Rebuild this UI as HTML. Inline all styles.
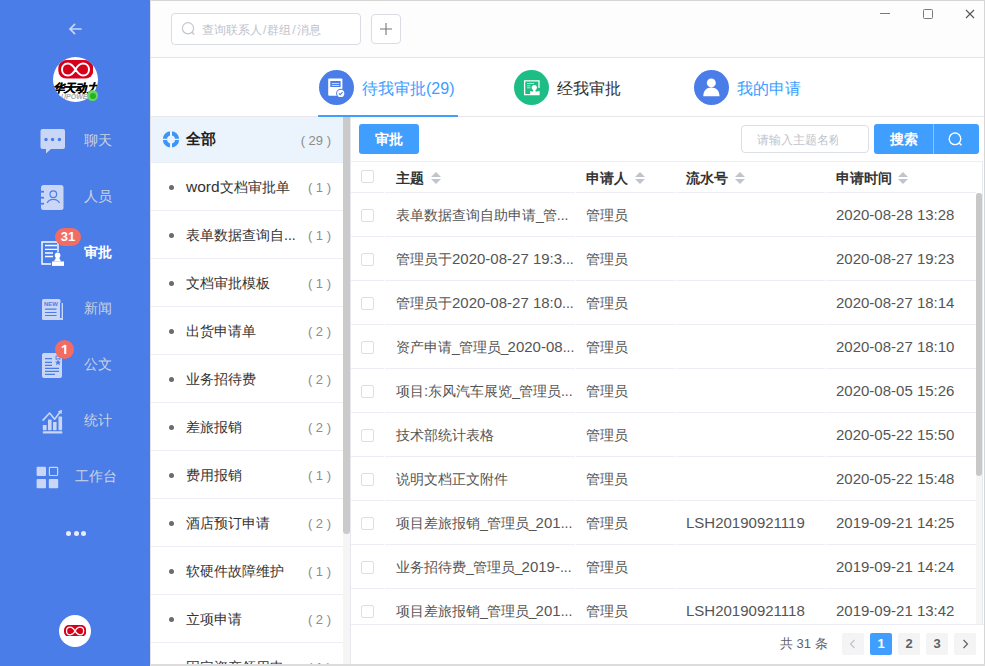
<!DOCTYPE html>
<html><head><meta charset="utf-8"><style>
*{box-sizing:border-box;margin:0;padding:0}
html,body{width:985px;height:666px;overflow:hidden;background:#fff;font-family:"Liberation Sans",sans-serif;}
.a{position:absolute}
.nt{position:absolute;font-size:14px;line-height:20px;color:#cbd3e2;white-space:nowrap}
.badge{position:absolute;background:#f36c64;color:#fff;font-weight:bold;font-size:13px;text-align:center;border-radius:10px;line-height:18px;height:18px}
.cat{position:absolute;left:150px;width:193px;height:48px;border-bottom:1px solid #ebeef5;background:#fff}
.dot{position:absolute;left:19px;top:22px;width:5px;height:5px;border-radius:50%;background:#6b6b6b}
.nm{position:absolute;left:36px;top:14px;line-height:20px;font-size:14px;color:#333;white-space:nowrap}
.cn{position:absolute;right:12px;top:15px;line-height:20px;font-size:13px;color:#8c8c8c;white-space:pre}
.row{position:absolute;left:351px;width:625px;height:44px;border-bottom:1px solid #ebeef5}
.c{position:absolute;top:12px;line-height:20px;font-size:14px;color:#555;white-space:nowrap}
.cb{position:absolute;left:10px;top:16px;width:13px;height:13px;border:1px solid #dcdfe6;border-radius:2px;background:#fff}
.pg{position:absolute;top:633px;width:22px;height:22px;background:#f4f4f5;border-radius:2px;font-size:13px;font-weight:bold;color:#606266;text-align:center;line-height:22px}
.l{font-size:15px}
.car{position:absolute;width:0;height:0;border-left:5px solid transparent;border-right:5px solid transparent}
</style></head><body>
<div class="a" style="left:0;top:0;width:150px;height:666px;background:#4a7de8"></div>
<svg class="a" style="left:66px;top:21px" width="18" height="16" viewBox="0 0 18 16"><path d="M15 8H4M8.6 3.4L4 8 8.6 12.6" fill="none" stroke="#c9d6f6" stroke-width="1.7" stroke-linecap="round"/></svg>
<div class="a" style="left:53px;top:57px;width:45px;height:45px;border-radius:50%;background:#fff;overflow:hidden"><svg class="a" style="left:5px;top:3px" width="35" height="19" viewBox="0 0 35 19"><rect x="0.3" y="0" width="35" height="18.6" rx="8" fill="#d7001a"/><path d="M17.5 9.5C20 5 22 3.5 25 3.5C29 3.5 31 6.5 31 9.5C31 12.5 29 15.5 25 15.5C21.5 15.5 19.5 12.5 17.5 9.5C15.5 6.5 13.5 3.5 10 3.5C6 3.5 4 6.5 4 9.5C4 12.5 6 15.5 10 15.5C13 15.5 15 14 17.5 9.5Z" fill="none" stroke="#fff" stroke-width="2"/></svg><div class="a" style="left:-3px;top:25px;width:51px;white-space:nowrap;text-align:center;font-size:11.5px;line-height:12px;font-weight:bold;font-style:italic;color:#000;letter-spacing:-0.6px;-webkit-text-stroke:0.3px #000">华天动力</div><div class="a" style="left:8px;top:36px;font-size:7px;line-height:8px;font-weight:bold;font-style:italic;color:#aaa">UPOWER</div></div>
<div class="a" style="left:87px;top:90px;width:11px;height:11px;border-radius:50%;background:#6ed36a"></div>
<div class="a" style="left:89.5px;top:92.5px;width:6px;height:6px;border-radius:50%;background:#1fb51c"></div>
<svg class="a" style="left:40px;top:128px" width="26" height="27" viewBox="0 0 26 27"><path d="M2.5 1H23a2 2 0 0 1 2 2V19a2 2 0 0 1-2 2H11L6 25.5V21H2.5a2 2 0 0 1-2-2V3a2 2 0 0 1 2-2z" fill="#c9d6f6"/><circle cx="6" cy="11.5" r="1.7" fill="#4a7de8"/><circle cx="12.6" cy="11.5" r="1.7" fill="#4a7de8"/><circle cx="19.4" cy="11.5" r="1.7" fill="#4a7de8"/></svg>
<div class="nt" style="left:84px;top:130px">聊天</div>
<svg class="a" style="left:40px;top:184px" width="25" height="27" viewBox="0 0 25 27"><rect x="1" y="1" width="22.5" height="25" rx="2.5" fill="#c9d6f6"/><rect x="0" y="6.8" width="4" height="1.8" fill="#4a7de8"/><rect x="0" y="12.8" width="4" height="1.8" fill="#4a7de8"/><rect x="0" y="18.8" width="4" height="1.8" fill="#4a7de8"/><circle cx="13.3" cy="10.2" r="3.3" fill="none" stroke="#4a7de8" stroke-width="1.2"/><path d="M7.2 19C9.5 14.2 17 14.2 19.5 19" fill="none" stroke="#4a7de8" stroke-width="1.2"/></svg>
<div class="nt" style="left:84px;top:186px">人员</div>
<svg class="a" style="left:40px;top:240px" width="26" height="28" viewBox="0 0 26 28"><path d="M18 12V2H2V24H11" fill="none" stroke="#fff" stroke-width="1.4"/><path d="M5 5.5H17M5 9.4H17M5 13H13M5 16.5H13" stroke="#fff" stroke-width="1.4"/><circle cx="17.6" cy="15.4" r="2.8" fill="#fff"/><path d="M16.2 17.5H19L21 21.5H16.2L13.8 21.5z" fill="#fff"/><rect x="12" y="21.5" width="12" height="4.4" fill="#fff"/></svg>
<div class="badge" style="left:55px;top:228px;width:26px">31</div>
<div class="nt" style="left:84px;top:242px;font-weight:bold;color:#fff">审批</div>
<svg class="a" style="left:41px;top:298px" width="23" height="23" viewBox="0 0 23 23"><path d="M19 5H22V22H20V5z" fill="#c9d6f6"/><rect x="1" y="1" width="18.5" height="21" rx="1.5" fill="#c9d6f6"/><rect x="18.5" y="5" width="3.5" height="17" rx="1" fill="#c9d6f6"/><rect x="19" y="5" width="1.6" height="15" fill="#4a7de8"/><text x="3" y="8.2" font-family="Liberation Sans" font-weight="bold" font-size="6" fill="#4a7de8" textLength="14">NEW</text><path d="M4 11.1H15.5M4 14.5H15.5M4 17.5H15.5" stroke="#4a7de8" stroke-width="1.2"/></svg>
<div class="nt" style="left:84px;top:298px">新闻</div>
<svg class="a" style="left:42px;top:353px" width="21" height="26" viewBox="0 0 21 26"><rect x="0" y="0" width="20" height="25" rx="2" fill="#c9d6f6"/><path d="M3 5.6H10M3 9.4H10M3 12.4H10M3 15.4H17M3 18.4H17M3 21.4H13" stroke="#4a7de8" stroke-width="1.1"/><path d="M14 3H18V6.5L16 5.5 14 6.5z" fill="none" stroke="#4a7de8" stroke-width="0.9"/><path d="M16 6.5L16.9 8.6 19 8.7 17.4 10 18 12.2 16 11 14 12.2 14.6 10 13 8.7 15.1 8.6z" fill="#4a7de8"/></svg>
<div class="badge" style="left:55px;top:340px;width:19px;height:19px;border-radius:50%;line-height:19px"></div>
<svg class="a" style="left:55px;top:340px" width="19" height="19" viewBox="0 0 19 19"><path d="M10.2 5V14" stroke="#fff" stroke-width="2.1"/><path d="M6.8 7.6L10.4 5.2" stroke="#fff" stroke-width="1.6"/></svg>
<div class="nt" style="left:84px;top:354px">公文</div>
<svg class="a" style="left:42px;top:409px" width="22" height="26" viewBox="0 0 22 26"><rect x="0.8" y="22.2" width="19.5" height="2.4" rx="0.6" fill="#c9d6f6"/><rect x="0.8" y="16" width="3.8" height="5.2" rx="0.6" fill="#c9d6f6"/><rect x="6" y="10.5" width="3.6" height="10.7" rx="0.6" fill="#c9d6f6"/><rect x="11" y="13" width="3.6" height="8.2" rx="0.6" fill="#c9d6f6"/><rect x="16.5" y="7.5" width="3.6" height="13.7" rx="0.6" fill="#c9d6f6"/><path d="M0.6 11.6L7.6 4 12.6 10.2 18.6 2.3" fill="none" stroke="#c9d6f6" stroke-width="1.6" stroke-linejoin="round"/><path d="M20 0.8L19.6 5.2 15.8 2.6z" fill="#c9d6f6"/></svg>
<div class="nt" style="left:84px;top:410px">统计</div>
<svg class="a" style="left:36px;top:466px" width="23" height="23" viewBox="0 0 23 23"><rect x="0.6" y="0.7" width="9.4" height="9.4" rx="1" fill="#c9d6f6"/><rect x="13.4" y="1.3" width="8.2" height="8.2" rx="0.8" fill="none" stroke="#c9d6f6" stroke-width="1.2"/><rect x="0.6" y="12.9" width="9.4" height="9.4" rx="1" fill="#c9d6f6"/><rect x="12.8" y="12.9" width="9.4" height="9.4" rx="1" fill="#c9d6f6"/></svg>
<div class="nt" style="left:75px;top:466px">工作台</div>
<div class="a" style="left:66.4px;top:531px;width:5px;height:5px;border-radius:50%;background:#e8ecf6"></div>
<div class="a" style="left:73.8px;top:531px;width:5px;height:5px;border-radius:50%;background:#e8ecf6"></div>
<div class="a" style="left:81.2px;top:531px;width:5px;height:5px;border-radius:50%;background:#e8ecf6"></div>
<div class="a" style="left:59px;top:615px;width:32px;height:32px;border-radius:50%;background:#fff"></div>
<svg class="a" style="left:64px;top:624.7px" width="22.2" height="11.8" viewBox="0 0 35 18.6"><rect x="0" y="0" width="35" height="18.6" rx="8" fill="#d7001a"/><path d="M17.5 9.5C20 5 22 3.5 25 3.5C29 3.5 31 6.5 31 9.5C31 12.5 29 15.5 25 15.5C21.5 15.5 19.5 12.5 17.5 9.5C15.5 6.5 13.5 3.5 10 3.5C6 3.5 4 6.5 4 9.5C4 12.5 6 15.5 10 15.5C13 15.5 15 14 17.5 9.5Z" fill="none" stroke="#fff" stroke-width="2"/></svg>
<div class="a" style="left:150px;top:0;width:835px;height:666px;background:#fff"></div>
<div class="a" style="left:150px;top:0;width:835px;height:58px;background:#fdfdfd;border-top:1px solid #d6d6d6;border-bottom:1px solid #e4e4e4"></div>
<div class="a" style="left:171px;top:13px;width:190px;height:32px;border:1px solid #d9dce3;border-radius:4px;background:#fff"></div>
<svg class="a" style="left:181px;top:21px" width="16" height="16" viewBox="0 0 16 16"><circle cx="7" cy="7.3" r="5.6" fill="none" stroke="#c3c6cf" stroke-width="1.2"/><path d="M11 11.3L13.2 13.5" stroke="#c3c6cf" stroke-width="1.3"/></svg>
<div class="a" style="left:202px;top:20px;font-size:12px;line-height:20px;color:#bfc2ca;white-space:nowrap">查询联系人<span style="padding:0 1px">/</span>群组<span style="padding:0 1px">/</span>消息</div>
<div class="a" style="left:371px;top:14px;width:30px;height:30px;border:1px solid #d9dce3;border-radius:4px;background:#fff"></div>
<svg class="a" style="left:380px;top:23px" width="12" height="12" viewBox="0 0 12 12"><path d="M0 6H12M6 0V12" stroke="#777" stroke-width="1.1"/></svg>
<div class="a" style="left:880px;top:13px;width:10px;height:1px;background:#7a7a7a"></div>
<div class="a" style="left:923px;top:9px;width:10px;height:10px;border:1px solid #7a7a7a;border-radius:1.5px"></div>
<svg class="a" style="left:965px;top:9px" width="10" height="10" viewBox="0 0 10 10"><path d="M1 1L9 9M9 1L1 9" stroke="#555" stroke-width="1.1"/></svg>
<div class="a" style="left:984px;top:0;width:1px;height:666px;background:#d6d6d6"></div>
<div class="a" style="left:150px;top:116px;width:834px;height:1px;background:#e8e8e8"></div>
<div class="a" style="left:318px;top:115px;width:140px;height:2px;background:#409eff"></div>
<div class="a" style="left:319px;top:70px;width:35px;height:35px;border-radius:50%;background:#4a7de8"></div>
<svg class="a" style="left:319px;top:70px" width="35" height="35" viewBox="0 0 35 35"><rect x="9.2" y="8.5" width="14.2" height="17.2" rx="1" fill="#fff"/><rect x="11.3" y="11" width="10.3" height="6" fill="#4a7de8"/><path d="M12.8 13.5H20.2M12.8 15.5H20.2" stroke="#c9d8fa" stroke-width="1"/><circle cx="21.7" cy="23.4" r="4.6" fill="#4a7de8"/><circle cx="21.7" cy="23.4" r="3.6" fill="#fff"/><path d="M19.9 23.3L21.2 24.6 23.6 22.2" fill="none" stroke="#4a7de8" stroke-width="1.1"/></svg>
<div class="a" style="left:362px;top:77.5px;font-size:16px;line-height:22px;color:#409eff;white-space:nowrap">待我审批(29)</div>
<div class="a" style="left:514px;top:70px;width:35px;height:35px;border-radius:50%;background:#1dbe85"></div>
<svg class="a" style="left:514px;top:70px" width="35" height="35" viewBox="0 0 35 35"><path d="M16.5 24.6H10.6V10.8H25V18" fill="none" stroke="#fff" stroke-width="1.3"/><path d="M13 13.5H20M13 15.8H16.5M13 17.8H16.5" stroke="#fff" stroke-width="0.9" opacity="0.75"/><circle cx="20.3" cy="17.6" r="2.6" fill="#fff"/><path d="M19.4 19.5H21.2L21.8 21.8 25.6 21V25.3H16.2V21L18.8 21.8z" fill="#fff"/></svg>
<div class="a" style="left:557px;top:77.5px;font-size:16px;line-height:22px;color:#333;white-space:nowrap">经我审批</div>
<div class="a" style="left:694px;top:70px;width:35px;height:35px;border-radius:50%;background:#4a7de8"></div>
<svg class="a" style="left:694px;top:70px" width="35" height="35" viewBox="0 0 35 35"><circle cx="17.3" cy="12.9" r="4.5" fill="#fff"/><path d="M9.3 26.2C9.3 21 12.5 17.6 17.3 17.6S25.5 21 25.5 26.2z" fill="#fff"/></svg>
<div class="a" style="left:737px;top:77.5px;font-size:16px;line-height:22px;color:#409eff;white-space:nowrap">我的申请</div>
<div class="a" style="left:150px;top:117px;width:193px;height:46px;background:#ebf3fd;border-bottom:1px solid #ebeef5"></div>
<svg class="a" style="left:162px;top:131px" width="18" height="18" viewBox="0 0 18 18"><circle cx="9" cy="8.4" r="6.1" fill="none" stroke="#3d95f5" stroke-width="4.2"/><path d="M9 0V17" stroke="#ebf3fd" stroke-width="2"/><path d="M0 8.4H18" stroke="#ebf3fd" stroke-width="1.3"/></svg>
<div class="a" style="left:186px;top:129px;font-size:15px;line-height:20px;font-weight:bold;color:#222;white-space:nowrap">全部</div>
<div class="cn" style="left:auto;right:654px;top:131px">( 29 )</div>
<div class="cat" style="top:163px"><div class="dot"></div><div class="nm"><span style="font-size:15.5px">word</span>文档审批单</div><div class="cn">( 1 )</div></div>
<div class="cat" style="top:211px"><div class="dot"></div><div class="nm">表单数据查询自...</div><div class="cn">( 1 )</div></div>
<div class="cat" style="top:259px"><div class="dot"></div><div class="nm">文档审批模板</div><div class="cn">( 1 )</div></div>
<div class="cat" style="top:307px"><div class="dot"></div><div class="nm">出货申请单</div><div class="cn">( 2 )</div></div>
<div class="cat" style="top:355px"><div class="dot"></div><div class="nm">业务招待费</div><div class="cn">( 2 )</div></div>
<div class="cat" style="top:403px"><div class="dot"></div><div class="nm">差旅报销</div><div class="cn">( 2 )</div></div>
<div class="cat" style="top:451px"><div class="dot"></div><div class="nm">费用报销</div><div class="cn">( 1 )</div></div>
<div class="cat" style="top:499px"><div class="dot"></div><div class="nm">酒店预订申请</div><div class="cn">( 2 )</div></div>
<div class="cat" style="top:547px"><div class="dot"></div><div class="nm">软硬件故障维护</div><div class="cn">( 1 )</div></div>
<div class="cat" style="top:595px"><div class="dot"></div><div class="nm">立项申请</div><div class="cn">( 2 )</div></div>
<div class="cat" style="top:643px"><div class="dot"></div><div class="nm">固定资产领用申...</div><div class="cn">( 1 )</div></div>
<div class="a" style="left:343px;top:117px;width:8px;height:549px;background:#f5f5f5"></div>
<div class="a" style="left:343px;top:117px;width:7px;height:417px;border-radius:0 0 3.5px 3.5px;background:#cacaca"></div>
<div class="a" style="left:350px;top:117px;width:1px;height:549px;background:#e6e8ee"></div>
<div class="a" style="left:359px;top:124px;width:60px;height:30px;border-radius:3px;background:#409eff;color:#fff;font-weight:bold;font-size:14px;line-height:30px;text-align:center">审批</div>
<div class="a" style="left:741px;top:125px;width:128px;height:28px;border:1px solid #dcdfe6;border-radius:4px;background:#fff"></div>
<div class="a" style="left:757px;top:130.5px;width:81px;overflow:hidden;font-size:12px;line-height:19px;color:#c0c4cc;white-space:nowrap">请输入主题名称</div>
<div class="a" style="left:874px;top:124px;width:105px;height:30px;border-radius:3px;background:#409eff"></div>
<div class="a" style="left:933px;top:124px;width:1px;height:30px;background:#8cc3ff"></div>
<div class="a" style="left:874px;top:124px;width:59px;font-size:14px;line-height:30px;color:#fff;text-align:center;font-weight:bold">搜索</div>
<svg class="a" style="left:947px;top:131px" width="17" height="17" viewBox="0 0 17 17"><circle cx="8" cy="7.8" r="5.8" fill="none" stroke="#fff" stroke-width="1.4"/><path d="M12 11.8L14.5 14.3" stroke="#fff" stroke-width="1.5"/></svg>
<div class="a" style="left:351px;top:161px;width:631px;height:1px;background:#ebeef5"></div>
<div class="row" style="top:161px;height:32px"><div class="cb" style="top:9px"></div><div class="c" style="left:45px;top:7px;font-weight:bold;color:#333">主题</div><div class="c" style="left:235px;top:7px;font-weight:bold;color:#333">申请人</div><div class="c" style="left:335px;top:7px;font-weight:bold;color:#333">流水号</div><div class="c" style="left:485px;top:7px;font-weight:bold;color:#333">申请时间</div></div>
<div class="car" style="left:431px;top:172px;border-bottom:5px solid #c0c4cc"></div>
<div class="car" style="left:431px;top:179px;border-top:5px solid #c0c4cc"></div>
<div class="car" style="left:635px;top:172px;border-bottom:5px solid #c0c4cc"></div>
<div class="car" style="left:635px;top:179px;border-top:5px solid #c0c4cc"></div>
<div class="car" style="left:735px;top:172px;border-bottom:5px solid #c0c4cc"></div>
<div class="car" style="left:735px;top:179px;border-top:5px solid #c0c4cc"></div>
<div class="car" style="left:898px;top:172px;border-bottom:5px solid #c0c4cc"></div>
<div class="car" style="left:898px;top:179px;border-top:5px solid #c0c4cc"></div>
<div class="a" style="left:0;top:0;width:985px;height:624px;overflow:hidden">
<div class="row" style="top:193px"><div class="cb"></div><div class="c" style="left:45px">表单数据查询自助申请<span style="letter-spacing:-1px">_</span>管...</div><div class="c" style="left:235px">管理员</div><div class="c" style="left:335px"></div><div class="c" style="left:485px"><span class="l">2020-08-28 13:28</span></div></div>
<div class="row" style="top:237px"><div class="cb"></div><div class="c" style="left:45px">管理员于<span class="l">2020-08-27 19:3</span>...</div><div class="c" style="left:235px">管理员</div><div class="c" style="left:335px"></div><div class="c" style="left:485px"><span class="l">2020-08-27 19:23</span></div></div>
<div class="row" style="top:281px"><div class="cb"></div><div class="c" style="left:45px">管理员于<span class="l">2020-08-27 18:0</span>...</div><div class="c" style="left:235px">管理员</div><div class="c" style="left:335px"></div><div class="c" style="left:485px"><span class="l">2020-08-27 18:14</span></div></div>
<div class="row" style="top:325px"><div class="cb"></div><div class="c" style="left:45px">资产申请<span style="letter-spacing:-1px">_</span>管理员<span style="letter-spacing:-1px">_</span><span class="l">2020-08</span>...</div><div class="c" style="left:235px">管理员</div><div class="c" style="left:335px"></div><div class="c" style="left:485px"><span class="l">2020-08-27 18:10</span></div></div>
<div class="row" style="top:369px"><div class="cb"></div><div class="c" style="left:45px">项目<span class="l">:</span>东风汽车展览<span style="letter-spacing:-1px">_</span>管理员...</div><div class="c" style="left:235px">管理员</div><div class="c" style="left:335px"></div><div class="c" style="left:485px"><span class="l">2020-08-05 15:26</span></div></div>
<div class="row" style="top:413px"><div class="cb"></div><div class="c" style="left:45px">技术部统计表格</div><div class="c" style="left:235px">管理员</div><div class="c" style="left:335px"></div><div class="c" style="left:485px"><span class="l">2020-05-22 15:50</span></div></div>
<div class="row" style="top:457px"><div class="cb"></div><div class="c" style="left:45px">说明文档正文附件</div><div class="c" style="left:235px">管理员</div><div class="c" style="left:335px"></div><div class="c" style="left:485px"><span class="l">2020-05-22 15:48</span></div></div>
<div class="row" style="top:501px"><div class="cb"></div><div class="c" style="left:45px">项目差旅报销<span style="letter-spacing:-1px">_</span>管理员<span style="letter-spacing:-1px">_</span><span class="l">201</span>...</div><div class="c" style="left:235px">管理员</div><div class="c" style="left:335px"><span class="l">LSH20190921119</span></div><div class="c" style="left:485px"><span class="l">2019-09-21 14:25</span></div></div>
<div class="row" style="top:545px"><div class="cb"></div><div class="c" style="left:45px">业务招待费<span style="letter-spacing:-1px">_</span>管理员<span style="letter-spacing:-1px">_</span><span class="l">2019-</span>...</div><div class="c" style="left:235px">管理员</div><div class="c" style="left:335px"></div><div class="c" style="left:485px"><span class="l">2019-09-21 14:24</span></div></div>
<div class="row" style="top:589px"><div class="cb"></div><div class="c" style="left:45px">项目差旅报销<span style="letter-spacing:-1px">_</span>管理员<span style="letter-spacing:-1px">_</span><span class="l">201</span>...</div><div class="c" style="left:235px">管理员</div><div class="c" style="left:335px"><span class="l">LSH20190921118</span></div><div class="c" style="left:485px"><span class="l">2019-09-21 13:42</span></div></div>
</div>
<div class="a" style="left:384px;top:192px;width:1px;height:1px;background:#fff"></div>
<div class="a" style="left:575px;top:192px;width:1px;height:1px;background:#fff"></div>
<div class="a" style="left:675px;top:192px;width:1px;height:1px;background:#fff"></div>
<div class="a" style="left:825px;top:192px;width:1px;height:1px;background:#fff"></div>
<div class="a" style="left:384px;top:236px;width:1px;height:1px;background:#fff"></div>
<div class="a" style="left:575px;top:236px;width:1px;height:1px;background:#fff"></div>
<div class="a" style="left:675px;top:236px;width:1px;height:1px;background:#fff"></div>
<div class="a" style="left:825px;top:236px;width:1px;height:1px;background:#fff"></div>
<div class="a" style="left:384px;top:280px;width:1px;height:1px;background:#fff"></div>
<div class="a" style="left:575px;top:280px;width:1px;height:1px;background:#fff"></div>
<div class="a" style="left:675px;top:280px;width:1px;height:1px;background:#fff"></div>
<div class="a" style="left:825px;top:280px;width:1px;height:1px;background:#fff"></div>
<div class="a" style="left:384px;top:324px;width:1px;height:1px;background:#fff"></div>
<div class="a" style="left:575px;top:324px;width:1px;height:1px;background:#fff"></div>
<div class="a" style="left:675px;top:324px;width:1px;height:1px;background:#fff"></div>
<div class="a" style="left:825px;top:324px;width:1px;height:1px;background:#fff"></div>
<div class="a" style="left:384px;top:368px;width:1px;height:1px;background:#fff"></div>
<div class="a" style="left:575px;top:368px;width:1px;height:1px;background:#fff"></div>
<div class="a" style="left:675px;top:368px;width:1px;height:1px;background:#fff"></div>
<div class="a" style="left:825px;top:368px;width:1px;height:1px;background:#fff"></div>
<div class="a" style="left:384px;top:412px;width:1px;height:1px;background:#fff"></div>
<div class="a" style="left:575px;top:412px;width:1px;height:1px;background:#fff"></div>
<div class="a" style="left:675px;top:412px;width:1px;height:1px;background:#fff"></div>
<div class="a" style="left:825px;top:412px;width:1px;height:1px;background:#fff"></div>
<div class="a" style="left:384px;top:456px;width:1px;height:1px;background:#fff"></div>
<div class="a" style="left:575px;top:456px;width:1px;height:1px;background:#fff"></div>
<div class="a" style="left:675px;top:456px;width:1px;height:1px;background:#fff"></div>
<div class="a" style="left:825px;top:456px;width:1px;height:1px;background:#fff"></div>
<div class="a" style="left:384px;top:500px;width:1px;height:1px;background:#fff"></div>
<div class="a" style="left:575px;top:500px;width:1px;height:1px;background:#fff"></div>
<div class="a" style="left:675px;top:500px;width:1px;height:1px;background:#fff"></div>
<div class="a" style="left:825px;top:500px;width:1px;height:1px;background:#fff"></div>
<div class="a" style="left:384px;top:544px;width:1px;height:1px;background:#fff"></div>
<div class="a" style="left:575px;top:544px;width:1px;height:1px;background:#fff"></div>
<div class="a" style="left:675px;top:544px;width:1px;height:1px;background:#fff"></div>
<div class="a" style="left:825px;top:544px;width:1px;height:1px;background:#fff"></div>
<div class="a" style="left:384px;top:588px;width:1px;height:1px;background:#fff"></div>
<div class="a" style="left:575px;top:588px;width:1px;height:1px;background:#fff"></div>
<div class="a" style="left:675px;top:588px;width:1px;height:1px;background:#fff"></div>
<div class="a" style="left:825px;top:588px;width:1px;height:1px;background:#fff"></div>
<div class="a" style="left:351px;top:624px;width:633px;height:1px;background:#ebeef5"></div>
<div class="a" style="left:976px;top:193px;width:6px;height:431px;background:#f6f6f6"></div>
<div class="a" style="left:982px;top:161px;width:1px;height:463px;background:#e6eaf1"></div>
<div class="a" style="left:976px;top:193px;width:6px;height:283px;border-radius:3px;background:#c8c8c8"></div>
<div class="a" style="left:780px;top:634px;font-size:13px;line-height:20px;color:#606266;white-space:pre">共 31 条</div>
<div class="pg" style="left:842px"><svg width="22" height="22" viewBox="0 0 22 22"><path d="M12.5 7L8.5 11 12.5 15" fill="none" stroke="#c0c4cc" stroke-width="1.2"/></svg></div>
<div class="pg" style="left:870px;background:#409eff;color:#fff">1</div>
<div class="pg" style="left:898px">2</div>
<div class="pg" style="left:926px">3</div>
<div class="pg" style="left:954px"><svg width="22" height="22" viewBox="0 0 22 22"><path d="M9.5 7L13.5 11 9.5 15" fill="none" stroke="#606266" stroke-width="1.2"/></svg></div>
<div class="a" style="left:150px;top:664px;width:835px;height:2px;background:#dcdcdc"></div>
<div class="a" style="left:150px;top:0;width:1px;height:666px;background:#e3e1dd"></div>
</body></html>
